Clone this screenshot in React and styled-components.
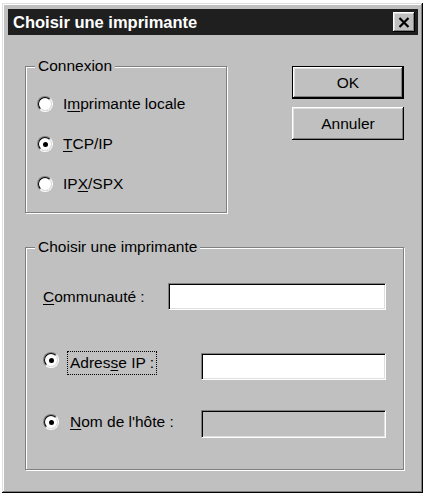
import React from "react";
import styled, { createGlobalStyle, css } from "styled-components";

const GlobalStyle = createGlobalStyle`
  body {
    margin: 0;
    background: #fff;
    font-family: "Liberation Sans", Arial, sans-serif;
  }
`;

const bevelOut = css`
  box-shadow: inset -1px -1px #000, inset 1px 1px #fff, inset -2px -2px #808080,
    inset 2px 2px #dfdfdf;
`;

const Window = styled.div`
  box-sizing: border-box;
  width: 421px;
  height: 490px;
  margin: 3px 0 0 2px;
  padding: 6px 5px 6px 6px;
  background: #c0c0c0;
  box-shadow: inset -1px -1px #000, inset 1px 1px #dfdfdf,
    inset -2px -2px #808080, inset 2px 2px #fff;
  display: flex;
  flex-direction: column;
  color: #000;
  font-size: 15.5px;
`;

const TitleBar = styled.div`
  height: 26px;
  background: #1f1f1f;
  display: flex;
  align-items: center;
  justify-content: space-between;
  padding: 0 3px 0 5px;
`;

const Title = styled.span`
  color: #fff;
  font-weight: bold;
  font-size: 16.5px;
`;

const CloseButton = styled.button`
  width: 22px;
  height: 20px;
  padding: 0;
  border: none;
  background: #c0c0c0;
  display: grid;
  place-items: center;
  ${bevelOut}
`;

const Body = styled.div`
  display: grid;
  grid-template-columns: 202px 112px;
  column-gap: 65px;
  align-items: start;
  padding: 22px 0 0 17px;
`;

const Group = styled.fieldset`
  margin: ${(p) => p.$top || 0}px 0 0;
  padding: 0;
  min-width: 0;
  border: 1px solid #808080;
  box-shadow: 1px 1px 0 #fff, inset 1px 1px 0 #fff;
  grid-column: ${(p) => (p.$wide ? "1 / -1" : "auto")};
`;

const Legend = styled.legend`
  margin-left: 9px;
  padding: 0 3px;
  line-height: 18px;
  background: #c0c0c0;
`;

const GroupContent = styled.div`
  display: flex;
  flex-direction: column;
  padding: ${(p) => p.$pad};
`;

const RadioRow = styled.label`
  height: 40px;
  display: flex;
  align-items: center;
  gap: 10px;
`;

const RadioOuter = styled.span`
  box-sizing: border-box;
  flex: none;
  width: 16px;
  height: 16px;
  margin-top: ${(p) => p.$top || 0}px;
  border-radius: 50%;
  border: 1px solid;
  border-color: #808080 #fff #fff #808080;
  display: flex;
`;

const RadioInner = styled.span`
  box-sizing: border-box;
  width: 14px;
  height: 14px;
  border-radius: 50%;
  border: 1px solid;
  border-color: #000 #dfdfdf #dfdfdf #000;
  background: #fff;
  display: grid;
  place-items: center;

  &::after {
    content: "";
    width: 5px;
    height: 5px;
    border-radius: 50%;
    background: ${(p) => (p.$checked ? "#000" : "transparent")};
  }
`;

const Key = styled.u`
  text-decoration-thickness: 1px;
  text-underline-offset: 2px;
`;

const Buttons = styled.div`
  display: flex;
  flex-direction: column;
  gap: 8px;
  margin-top: 9px;
`;

const Button = styled.button`
  box-sizing: border-box;
  width: 112px;
  height: 33px;
  padding: 0;
  background: #c0c0c0;
  font-family: inherit;
  font-size: 15.5px;
  color: #000;
  border: ${(p) => (p.$default ? "1px solid #000" : "none")};
  ${bevelOut}
`;

const FieldRow = styled.div`
  display: flex;
  align-items: ${(p) => p.$align || "flex-start"};
  margin-top: ${(p) => p.$top || 0}px;
`;

const FieldLabel = styled.span`
  box-sizing: border-box;
  height: 24px;
  line-height: 22px;
  margin-left: ${(p) => p.$left || 0}px;
  padding: 0 2px;
  border: 1px ${(p) => (p.$focus ? "dotted #000" : "solid transparent")};
  white-space: nowrap;
`;

const TextField = styled.input`
  box-sizing: border-box;
  margin: ${(p) => p.$top || 0}px 0 0 auto;
  width: ${(p) => p.$w}px;
  height: ${(p) => p.$h}px;
  padding: 0 3px;
  font-family: inherit;
  font-size: 15.5px;
  background: #fff;
  border: 1px solid;
  border-color: #808080 #fff #fff #808080;
  box-shadow: inset 1px 1px #000, inset -1px -1px #dfdfdf;
  outline: none;

  &:disabled {
    background: #c0c0c0;
  }
`;

const Radio = ({ checked, top }) => (
  <RadioOuter $top={top}>
    <RadioInner $checked={checked} />
  </RadioOuter>
);

export default function App() {
  return (
    <>
      <GlobalStyle />
      <Window>
        <TitleBar>
          <Title>Choisir une imprimante</Title>
          <CloseButton aria-label="Fermer">
            <svg width="12" height="11" viewBox="0 0 12 11">
              <path d="M1.5 1 L10.5 10 M10.5 1 L1.5 10" stroke="#000" strokeWidth="2.2" />
            </svg>
          </CloseButton>
        </TitleBar>

        <Body>
          <Group>
            <Legend>Connexion</Legend>
            <GroupContent $pad="9px 0 8px 11px">
              <RadioRow>
                <Radio />
                <span>
                  I<Key>m</Key>primante locale
                </span>
              </RadioRow>
              <RadioRow>
                <Radio checked />
                <span>
                  <Key>T</Key>CP/IP
                </span>
              </RadioRow>
              <RadioRow>
                <Radio />
                <span>
                  IP<Key>X</Key>/SPX
                </span>
              </RadioRow>
            </GroupContent>
          </Group>

          <Buttons>
            <Button $default>OK</Button>
            <Button>Annuler</Button>
          </Buttons>

          <Group $wide $top={25}>
            <Legend>Choisir une imprimante</Legend>
            <GroupContent $pad="27px 17px 31px 17px">
              <FieldRow $align="center">
                <span>
                  <Key>C</Key>ommunauté :
                </span>
                <TextField $w={218} $h={27} />
              </FieldRow>
              <FieldRow $top={41}>
                <Radio checked top={1} />
                <FieldLabel $left={8} $focus>
                  Adres<Key>s</Key>e IP :
                </FieldLabel>
                <TextField $w={185} $h={27} $top={2} />
              </FieldRow>
              <FieldRow $top={30}>
                <Radio checked top={4} />
                <FieldLabel $left={8}>
                  <Key>N</Key>om de l'hôte :
                </FieldLabel>
                <TextField $w={185} $h={28} disabled />
              </FieldRow>
            </GroupContent>
          </Group>
        </Body>
      </Window>
    </>
  );
}
